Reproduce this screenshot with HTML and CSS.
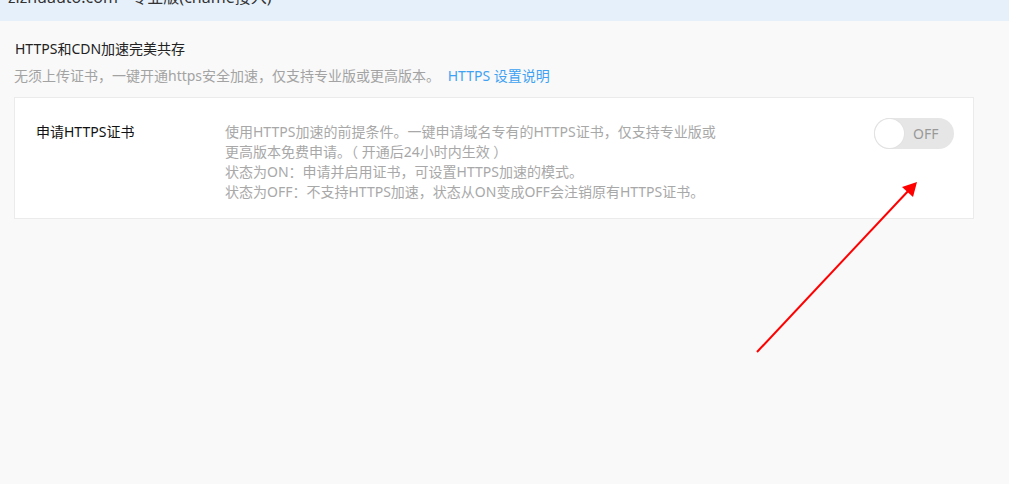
FILE: index.html
```html
<!DOCTYPE html>
<html lang="zh-CN">

<head>
    <meta charset="UTF-8">
    <title>HTTPS设置</title>
    <link rel="stylesheet" href="styles.css">
</head>

<body>
    <div class="top-bar">
        <h1 class="site-name">zizhuauto.com - 专业版(cname接入)</h1>
    </div>

    <div class="main">
        <h2 class="sec-tit">HTTPS和CDN加速完美共存</h2>
        <p class="sec-desc">无须上传证书，一键开通https安全加速，仅支持专业版或更高版本。 <a href="#">HTTPS 设置说明</a></p>

        <div class="setting-card">
            <div class="setting-name">申请HTTPS证书</div>
            <div class="setting-info">
                <p>使用HTTPS加速的前提条件。一键申请域名专有的HTTPS证书，仅支持专业版或<br>更高版本免费申请。（ 开通后24小时内生效 ）</p>
                <p>状态为ON：申请并启用证书，可设置HTTPS加速的模式。</p>
                <p>状态为OFF：不支持HTTPS加速，状态从ON变成OFF会注销原有HTTPS证书。</p>
            </div>
            <div class="switch">
                <span class="switch-knob"></span>
                <span class="switch-txt">OFF</span>
            </div>
        </div>
    </div>

    <!-- 标注箭头 -->
    <svg class="mark-arrow" width="1009" height="484" viewBox="0 0 1009 484">
        <line x1="757" y1="352" x2="910" y2="189" stroke="#ff0000" stroke-width="2" />
        <polygon points="917,182 902,187 913,197" fill="#ff0000" />
    </svg>
</body>

</html>
```

FILE: styles.css
```css
* {
    margin: 0;
    padding: 0;
}

body {
    background: #f9f9f9;
    font-family: "Noto Sans", "Noto Sans CJK SC", sans-serif;
    font-size: 14px;
    color: #333;
    position: relative;
    height: 484px;
    overflow: hidden;
}

.top-bar {
    height: 21px;
    background: #e6f0fa;
    overflow: hidden;
    padding-left: 8px;
}

.site-name {
    font-size: 16px;
    font-weight: normal;
    line-height: 24px;
    margin-top: -15px;
    color: #333;
}

.main {
    padding: 18px 14px 0;
}

.sec-tit {
    font-size: 14px;
    font-weight: normal;
    line-height: 20px;
    color: #222;
    padding-left: 1px;
}

.sec-desc {
    margin-top: 7px;
    line-height: 20px;
    color: #a3a3a3;
}

.sec-desc a {
    color: #3fa2f2;
    text-decoration: none;
    margin-left: 4px;
}

.setting-card {
    width: 960px;
    box-sizing: border-box;
    margin-top: 11px;
    background: #fff;
    border: 1px solid #ebebeb;
    display: flex;
    align-items: flex-start;
    padding: 20px 19px 16px 21px;
}

.setting-name {
    width: 189px;
    padding-top: 4px;
    line-height: 20px;
    color: #111;
}

.setting-info {
    width: 520px;
    padding-top: 4px;
    line-height: 20px;
    color: #a8a8a8;
}

.switch {
    margin-left: auto;
    width: 80px;
    height: 31px;
    border-radius: 16px;
    background: #e6e6e6;
    display: flex;
    align-items: center;
    padding: 0 1px;
    box-sizing: border-box;
}

.switch-knob {
    width: 29px;
    height: 29px;
    border-radius: 50%;
    background: #fff;
    box-shadow: 0 0 0 1px #e2e2e2;
}

.switch-txt {
    margin-left: 9px;
    font-size: 14px;
    color: #999;
}

.mark-arrow {
    position: absolute;
    left: 0;
    top: 0;
    pointer-events: none;
}
```
